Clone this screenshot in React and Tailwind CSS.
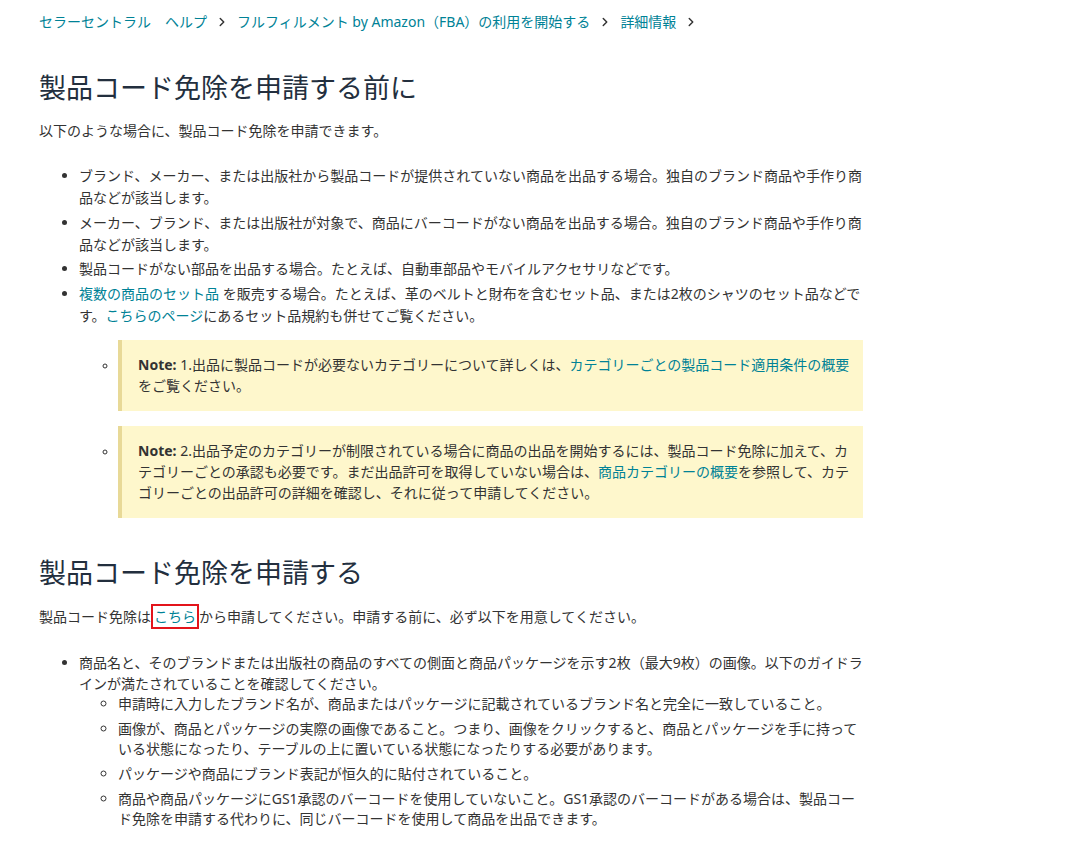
import React from 'react';
import { ChevronRight } from 'lucide-react';

const link = 'text-[#008296]';
const noteBox = 'bg-[#fef7cc] border-l-[4px] border-[#e8d997] pl-[16px] pr-[6px] py-[14.5px] leading-[21px]';

function Crumb({ children }) {
  return (
    <>
      <a className={`${link} whitespace-nowrap`}>{children}</a>
      <ChevronRight className="mx-[8px] h-[14px] w-[14px] text-[#333]" strokeWidth={2.5} />
    </>
  );
}

export default function App() {
  return (
    <div
      className="w-[863px] pl-[39px] pt-[12px] pb-[20px] text-[14px] text-[#333] bg-white"
      style={{ fontFamily: '"Noto Sans", "Noto Sans CJK JP", sans-serif' }}
    >
      {/* breadcrumb */}
      <nav className="flex items-center leading-[20px]">
        <Crumb>セラーセントラル　ヘルプ</Crumb>
        <Crumb>フルフィルメント by Amazon（FBA）の利用を開始する</Crumb>
        <Crumb>詳細情報</Crumb>
      </nav>

      <h1 className="mt-[38px] text-[27px] leading-[36px] font-normal text-[#232f3e]">
        製品コード免除を申請する前に
      </h1>
      <p className="mt-[14px] leading-[22px]">以下のような場合に、製品コード免除を申請できます。</p>

      <ul className="mt-[23px] list-disc pl-[40px] leading-[22px] space-y-[2.5px]">
        <li>ブランド、メーカー、または出版社から製品コードが提供されていない商品を出品する場合。独自のブランド商品や手作り商品などが該当します。</li>
        <li>メーカー、ブランド、または出版社が対象で、商品にバーコードがない商品を出品する場合。独自のブランド商品や手作り商品などが該当します。</li>
        <li>製品コードがない部品を出品する場合。たとえば、自動車部品やモバイルアクセサリなどです。</li>
        <li>
          <a className={link}>複数の商品のセット品</a> を販売する場合。たとえば、革のベルトと財布を含むセット品、または2枚のシャツのセット品などです。<a className={link}>こちらのページ</a>にあるセット品規約も併せてご覧ください。
          <ul className="list-[circle] pl-[39px] space-y-[15px] pt-[13px]">
            <li className="marker:text-[12px]">
              <div className={noteBox}>
                <b className="font-bold">Note:</b> 1.出品に製品コードが必要ないカテゴリーについて詳しくは、<a className={link}>カテゴリーごとの製品コード適用条件の概要</a>をご覧ください。
              </div>
            </li>
            <li className="marker:text-[12px]">
              <div className={noteBox}>
                <b className="font-bold">Note:</b> 2.出品予定のカテゴリーが制限されている場合に商品の出品を開始するには、製品コード免除に加えて、カテゴリーごとの承認も必要です。まだ出品許可を取得していない場合は、<a className={link}>商品カテゴリーの概要</a>を参照して、カテゴリーごとの出品許可の詳細を確認し、それに従って申請してください。
              </div>
            </li>
          </ul>
        </li>
      </ul>

      <h2 className="mt-[37px] text-[27px] leading-[36px] font-normal text-[#232f3e]">
        製品コード免除を申請する
      </h2>
      <p className="mt-[13px] leading-[22px]">
        製品コード免除は<a className={`${link} inline-block border-2 border-[#e3141b] px-[1px] leading-[21px]`}>こちら</a>から申請してください。申請する前に、必ず以下を用意してください。
      </p>

      <ul className="mt-[23px] list-disc pl-[40px] leading-[21px]">
        <li>
          商品名と、そのブランドまたは出版社の商品のすべての側面と商品パッケージを示す2枚（最大9枚）の画像。以下のガイドラインが満たされていることを確認してください。
          <ul className="list-[circle] pl-[39px] leading-[20px] space-y-[5px]">
            <li>申請時に入力したブランド名が、商品またはパッケージに記載されているブランド名と完全に一致していること。</li>
            <li>画像が、商品とパッケージの実際の画像であること。つまり、画像をクリックすると、商品とパッケージを手に持っている状態になったり、テーブルの上に置いている状態になったりする必要があります。</li>
            <li>パッケージや商品にブランド表記が恒久的に貼付されていること。</li>
            <li>商品や商品パッケージにGS1承認のバーコードを使用していないこと。GS1承認のバーコードがある場合は、製品コード免除を申請する代わりに、同じバーコードを使用して商品を出品できます。</li>
          </ul>
        </li>
      </ul>
    </div>
  );
}
